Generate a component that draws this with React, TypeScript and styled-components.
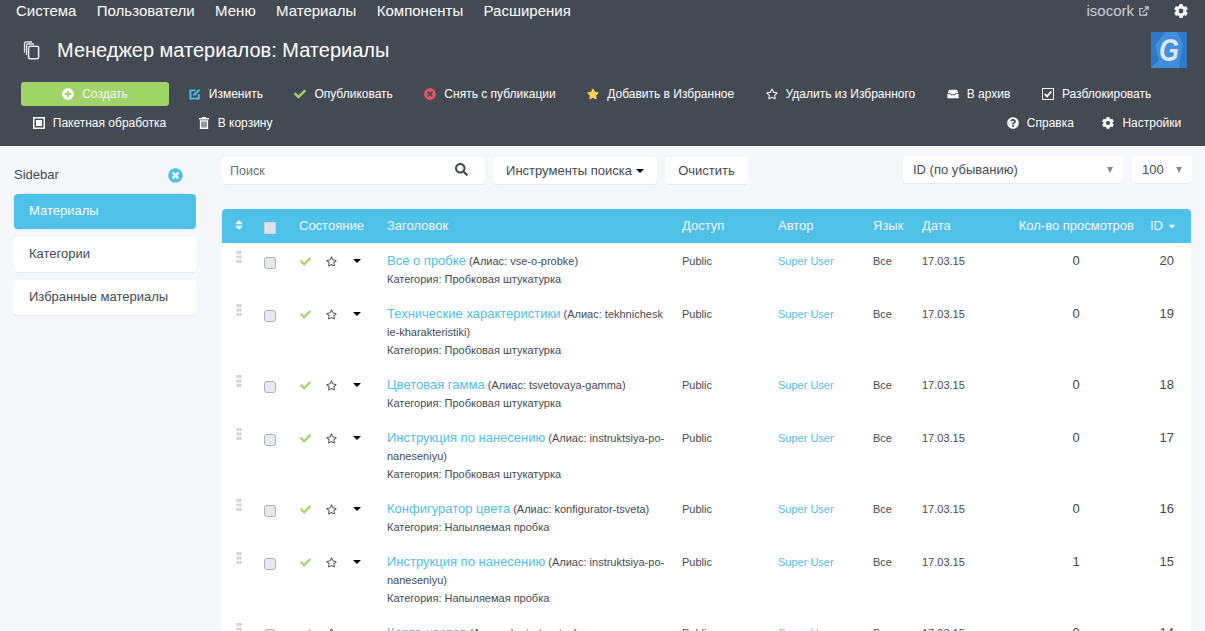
import { ReactNode } from "react"
import styled, { createGlobalStyle } from "styled-components"
import {
  FaCaretDown,
  FaCheck,
  FaPlusCircle,
  FaQuestionCircle,
  FaRegStar,
  FaSearch,
  FaStar,
  FaTimesCircle,
  FaSort,
} from "react-icons/fa"

const GlobalStyle = createGlobalStyle`
  html, body {
    margin: 0;
    height: 100%;
    overflow: hidden;
    background: #f5f7fa;
    font-family: "Liberation Sans", Arial, sans-serif;
    color: #434a54;
  }
  * {
    box-sizing: border-box;
  }
`

const Header = styled.header`
  background: #434a54;
  height: 146px;
  color: #fff;
`

const TopNav = styled.nav`
  display: flex;
  align-items: center;
  justify-content: space-between;
  height: 21px;
  padding: 0 16px;
  font-size: 15px;
`

const NavLinks = styled.div`
  display: flex;
  gap: 20.4px;
`

const NavRight = styled.div`
  display: flex;
  align-items: center;
  gap: 5px;
  color: #ccd1d9;
`

const NavGear = styled.span`
  display: flex;
  margin-left: 20px;
  margin-right: 1px;
  color: #fff;
`

const TitleRow = styled.div`
  display: flex;
  align-items: center;
  height: 46px;
  padding: 5px 18px 0 21px;
  margin-top: 3px;
`

const PageTitle = styled.h1`
  flex: 1;
  margin: 0 0 0 16px;
  font-size: 20px;
  font-weight: 400;
  line-height: 24px;
`

const Toolbar = styled.div`
  display: flex;
  flex-wrap: wrap;
  padding: 9px 8px 0 17px;
  font-size: 12px;
`

const ToolbarRow = styled.div<{ $spread?: boolean }>`
  display: flex;
  width: 100%;
  height: 29px;
  align-items: center;
  justify-content: ${(props) => (props.$spread ? "space-between" : "flex-start")};
`

const ToolGroup = styled.div<{ $squeeze?: boolean }>`
  display: flex;

  button + button {
    margin-left: ${(props) => (props.$squeeze ? "-3px" : "0")};
  }
`

const ToolButton = styled.button<{ $iconColor?: string }>`
  display: flex;
  align-items: center;
  gap: 8px;
  height: 24px;
  padding: 0 15.75px;
  border: 0;
  background: none;
  color: #fff;
  font: inherit;

  svg {
    width: 12px;
    height: 12px;
    color: ${(props) => props.$iconColor || "#fff"};
    flex: none;
  }
`

const CreateButton = styled(ToolButton)`
  justify-content: center;
  width: 148px;
  margin: 0 4px 0 4px;
  border-radius: 3px;
  background: #a0d468;
  color: #f5f7fa;
`

const Main = styled.main`
  display: flex;
  padding: 10px 13px 0 14px;
`

const Sidebar = styled.aside`
  flex: none;
  width: 182px;
  margin-right: 26px;
`

const SidebarHead = styled.div`
  display: flex;
  align-items: center;
  justify-content: space-between;
  height: 38px;
  padding: 0 13px 0 0;
  font-size: 13px;
  line-height: 36px;

  svg {
    color: #4fc0e8;
    font-size: 15px;
  }
`

const SideItem = styled.a<{ $active?: boolean }>`
  display: block;
  height: 35px;
  margin-bottom: 8px;
  padding-left: 15px;
  border-radius: 4px;
  background: ${(props) => (props.$active ? "#4fc0e8" : "#fff")};
  box-shadow: 0 1px 1px rgba(0, 0, 0, 0.06);
  color: ${(props) => (props.$active ? "#fff" : "#434a54")};
  font-size: 13px;
  line-height: 33px;
`

const Content = styled.section`
  flex: 1;
  min-width: 0;
`

const FilterBar = styled.div`
  display: flex;
  height: 53px;
  font-size: 13px;
`

const SearchBox = styled.div`
  display: flex;
  align-items: center;
  justify-content: space-between;
  width: 263px;
  height: 27px;
  margin: 1px 8px 0 0;
  padding: 0 17px 0 8px;
  border-radius: 4px;
  background: #fff;
  box-shadow: 0 1px 1px rgba(0, 0, 0, 0.06);
  color: #656d78;
  font-size: 12.5px;

  svg {
    color: #434a54;
    font-size: 13px;
    margin-top: -2px;
  }
`

const FilterButton = styled.button<{ $width: number }>`
  display: flex;
  align-items: center;
  justify-content: center;
  gap: 4px;
  width: ${(props) => props.$width}px;
  height: 27px;
  margin: 1px 8px 0 0;
  padding: 0;
  border: 0;
  border-radius: 4px;
  background: #fff;
  box-shadow: 0 1px 1px rgba(0, 0, 0, 0.06);
  color: #434a54;
  font: inherit;
`

const SelectBox = styled.div<{ $width: number; $pushed?: boolean }>`
  display: flex;
  align-items: center;
  justify-content: space-between;
  width: ${(props) => props.$width}px;
  height: 27px;
  margin-left: ${(props) => (props.$pushed ? "auto" : "9px")};
  padding: 0 10px;
  border-radius: 4px;
  background: #fff;
  box-shadow: 0 1px 1px rgba(0, 0, 0, 0.06);
`

const SelectArrow = styled.span`
  width: 0;
  height: 0;
  border-left: 3.5px solid transparent;
  border-right: 3.5px solid transparent;
  border-top: 6px solid #888;
`

const Table = styled.table`
  width: 969px;
  table-layout: fixed;
  border-collapse: separate;
  border-spacing: 0;
  background: #fff;
  font-size: 11px;
`

const HeadCell = styled.th<{ $align?: string; $padRight?: number }>`
  height: 34px;
  padding: 0 ${(props) => props.$padRight || 8}px 1px 8px;
  background: #4fc0e8;
  color: #f5f7fa;
  font-size: 13px;
  font-weight: 400;
  text-align: ${(props) => props.$align || "left"};
  white-space: nowrap;

  &:first-child {
    border-top-left-radius: 4px;
  }

  &:last-child {
    border-top-right-radius: 4px;
  }

  svg {
    vertical-align: -1px;
  }
`

const Cell = styled.td<{ $align?: string; $size?: number; $padRight?: number }>`
  padding: 9px ${(props) => props.$padRight || 8}px 8px 8px;
  vertical-align: top;
  line-height: 18px;
  font-size: ${(props) => props.$size || 11}px;
  text-align: ${(props) => props.$align || "left"};
`

const Check = styled.input.attrs({ type: "checkbox" })`
  appearance: none;
  display: block;
  width: 12px;
  height: 12px;
  margin: 5px 0 0;
  border: 1px solid #aab2bd;
  border-radius: 3px;
  background: #e6e9ed;
`

const HeadCheck = styled(Check)`
  margin: 4px 0 0;
  border-color: #ccd1d9;
  border-radius: 0;
  background: #dfe3e8;
`

const StateIcons = styled.div`
  display: flex;
  align-items: center;
  height: 18px;
  padding-left: 1px;
  font-size: 11px;
`

const StateSlot = styled.span<{ $width: number; $color: string }>`
  display: flex;
  width: ${(props) => props.$width}px;
  color: ${(props) => props.$color};
`

const Caret = styled.span`
  width: 0;
  height: 0;
  border-left: 4px solid transparent;
  border-right: 4px solid transparent;
  border-top: 4px solid #000;
`

const TitleLink = styled.a`
  color: #4fc0e8;
  font-size: 13px;
`

const Alias = styled.span`
  word-break: break-all;
`

const AuthorLink = styled.a`
  color: #4fc0e8;
`

const Handle = styled.svg`
  display: block;
  margin: -1px auto 0;
  fill: #ccd1d9;
`

function PagesIcon() {
  return (
    <svg width="20" height="20" viewBox="0 0 20 20" fill="none" stroke="#e6e9ed" strokeWidth="1.3">
      <path d="M3.5 12.5 V3.5 Q3.5 2 5 2 H11" />
      <path d="M5.5 15 V5.5 Q5.5 4 7 4 H13" />
      <rect x="7.6" y="6.2" width="10" height="12.6" rx="1.5" strokeWidth="1.6" />
    </svg>
  )
}

function GLogo() {
  return (
    <svg width="36" height="36" viewBox="0 0 36 36">
      <rect width="36" height="36" fill="#3f8fdc" />
      <path d="M0 0 H14 L4 14 L8 28 L0 36 Z" fill="#2f79c4" />
      <path d="M36 0 H26 L32 12 L28 36 H36 Z" fill="#2f79c4" />
      <text
        transform="translate(18 29) scale(0.8 1)"
        textAnchor="middle"
        fontFamily="Liberation Sans, sans-serif"
        fontSize="32"
        fontWeight="700"
        fontStyle="italic"
        fill="#dfe6ec"
      >
        G
      </text>
    </svg>
  )
}

function GearIcon({ size = 14 }: { size?: number }) {
  return (
    <svg width={size} height={size} viewBox="0 0 14 14" fill="currentColor">
      {[0, 60, 120, 180, 240, 300].map((angle) => (
        <rect key={angle} x="5.2" y="0.2" width="3.6" height="3" transform={`rotate(${angle} 7 7)`} />
      ))}
      <circle cx="7" cy="7" r="3.9" fill="none" stroke="currentColor" strokeWidth="3" />
    </svg>
  )
}

function LinkOutIcon() {
  return (
    <svg width="10" height="10" viewBox="0 0 10 10" fill="none" stroke="currentColor" strokeWidth="1.2">
      <path d="M7.5 6 V9.2 H0.8 V2.5 H4" />
      <path d="M3.6 6.4 L8.8 1.2 M5.8 0.8 H9.2 V4.2" />
    </svg>
  )
}

function EditIcon() {
  return (
    <svg viewBox="0 0 13 13" fill="none">
      <path d="M10.5 6.5 V11.5 H1.5 V2.5 H7" stroke="#4fc0e8" strokeWidth="2" />
      <path d="M4.5 8.5 L5 6.3 L10.3 1 L12 2.7 L6.7 8 Z" fill="#4fc0e8" />
    </svg>
  )
}

function BatchIcon() {
  return (
    <svg viewBox="0 0 12 12">
      <rect x="0.75" y="0.75" width="10.5" height="10.5" fill="none" stroke="#fff" strokeWidth="1.5" />
      <rect x="3" y="3" width="6" height="6" fill="#fff" />
    </svg>
  )
}

function ArchiveIcon() {
  return (
    <svg viewBox="0 0 13 9" fill="#fff">
      <path d="M3 0 H10 Q11 0 11.5 1.5 L12.3 3.6 H9.2 L8.4 4.8 H4.6 L3.8 3.6 H0.7 L1.5 1.5 Q2 0 3 0 Z" />
      <path d="M0.4 4.6 H3.3 L4.1 5.8 H8.9 L9.7 4.6 H12.6 V9 H0.4 Z" />
    </svg>
  )
}

function UnlockIcon() {
  return (
    <svg viewBox="0 0 13 13" fill="none" stroke="#fff">
      <rect x="0.5" y="0.5" width="12" height="12" />
      <path d="M3 6.5 L5.5 9 L10 3.8" strokeWidth="2" />
    </svg>
  )
}

function TrashIcon() {
  return (
    <svg viewBox="0 0 11 13" fill="#fff">
      <path d="M3.5 0 H7.5 V1 H11 V2.6 H0 V1 H3.5 Z" />
      <path fillRule="evenodd" d="M1 3.4 H10 V13 H1 Z M2.8 5 V11.4 H4 V5 Z M4.9 5 V11.4 H6.1 V5 Z M7 5 V11.4 H8.2 V5 Z" />
    </svg>
  )
}

function DragHandle() {
  return (
    <Handle width="6" height="12" viewBox="0 0 6 12">
      {[0, 4.5, 9].map((y) => (
        <g key={y}>
          <rect x="0.5" y={y} width="2.3" height="3" />
          <rect x="3.2" y={y} width="2.3" height="3" />
        </g>
      ))}
    </Handle>
  )
}

function Tool({ icon, label, color }: { icon: ReactNode; label: string; color?: string }) {
  return (
    <ToolButton $iconColor={color}>
      {icon}
      {label}
    </ToolButton>
  )
}

const columns = [34, 35, 88, 295, 96, 95, 49, 96, 132, 49]

const rows = [
  { title: "Все о пробке", alias: "vse-o-probke", category: "Пробковая штукатурка", views: 0, id: 20 },
  { title: "Технические характеристики", alias: "tekhnicheskie-kharakteristiki", category: "Пробковая штукатурка", views: 0, id: 19 },
  { title: "Цветовая гамма", alias: "tsvetovaya-gamma", category: "Пробковая штукатурка", views: 0, id: 18 },
  { title: "Инструкция по нанесению", alias: "instruktsiya-po-naneseniyu", category: "Пробковая штукатурка", views: 0, id: 17 },
  { title: "Конфигуратор цвета", alias: "konfigurator-tsveta", category: "Напыляемая пробка", views: 0, id: 16 },
  { title: "Инструкция по нанесению", alias: "instruktsiya-po-naneseniyu", category: "Напыляемая пробка", views: 1, id: 15 },
  { title: "Карта цветов", alias: "karta-tsvetov", category: "Напыляемая пробка", views: 0, id: 14 },
]

export default function App() {
  return (
    <>
      <GlobalStyle />
      <Header>
        <TopNav>
          <NavLinks>
            <span>Система</span>
            <span>Пользователи</span>
            <span>Меню</span>
            <span>Материалы</span>
            <span>Компоненты</span>
            <span>Расширения</span>
          </NavLinks>
          <NavRight>
            isocork <LinkOutIcon />
            <NavGear>
              <GearIcon />
            </NavGear>
          </NavRight>
        </TopNav>
        <TitleRow>
          <PagesIcon />
          <PageTitle>Менеджер материалов: Материалы</PageTitle>
          <GLogo />
        </TitleRow>
        <Toolbar>
          <ToolbarRow>
            <CreateButton>
              <FaPlusCircle />
              Создать
            </CreateButton>
            <Tool icon={<EditIcon />} label="Изменить" />
            <Tool icon={<FaCheck />} label="Опубликовать" color="#a0d468" />
            <Tool icon={<FaTimesCircle />} label="Снять с публикации" color="#ed5565" />
            <Tool icon={<FaStar />} label="Добавить в Избранное" color="#ffce54" />
            <Tool icon={<FaRegStar />} label="Удалить из Избранного" />
            <Tool icon={<ArchiveIcon />} label="В архив" />
            <Tool icon={<UnlockIcon />} label="Разблокировать" />
          </ToolbarRow>
          <ToolbarRow $spread>
            <ToolGroup>
              <Tool icon={<BatchIcon />} label="Пакетная обработка" />
              <Tool icon={<TrashIcon />} label="В корзину" />
            </ToolGroup>
            <ToolGroup $squeeze>
              <Tool icon={<FaQuestionCircle />} label="Справка" />
              <Tool icon={<GearIcon />} label="Настройки" />
            </ToolGroup>
          </ToolbarRow>
        </Toolbar>
      </Header>
      <Main>
        <Sidebar>
          <SidebarHead>
            Sidebar
            <FaTimesCircle />
          </SidebarHead>
          <SideItem $active>Материалы</SideItem>
          <SideItem>Категории</SideItem>
          <SideItem>Избранные материалы</SideItem>
        </Sidebar>
        <Content>
          <FilterBar>
            <SearchBox>
              Поиск
              <FaSearch />
            </SearchBox>
            <FilterButton $width={164}>
              Инструменты поиска
              <Caret />
            </FilterButton>
            <FilterButton $width={83}>Очистить</FilterButton>
            <SelectBox $width={220} $pushed>
              ID (по убыванию)
              <SelectArrow />
            </SelectBox>
            <SelectBox $width={60}>
              100
              <SelectArrow />
            </SelectBox>
          </FilterBar>
          <Table>
            <colgroup>
              {columns.map((width, i) => (
                <col key={i} width={width} />
              ))}
            </colgroup>
            <thead>
              <tr>
                <HeadCell $align="center">
                  <FaSort size={12} />
                </HeadCell>
                <HeadCell>
                  <HeadCheck />
                </HeadCell>
                <HeadCell>Состояние</HeadCell>
                <HeadCell>Заголовок</HeadCell>
                <HeadCell>Доступ</HeadCell>
                <HeadCell>Автор</HeadCell>
                <HeadCell>Язык</HeadCell>
                <HeadCell>Дата</HeadCell>
                <HeadCell $align="right">Кол-во просмотров</HeadCell>
                <HeadCell>
                  ID <FaCaretDown size={10} />
                </HeadCell>
              </tr>
            </thead>
            <tbody>
              {rows.map((row) => (
                <tr key={row.id}>
                  <Cell>
                    <DragHandle />
                  </Cell>
                  <Cell>
                    <Check />
                  </Cell>
                  <Cell>
                    <StateIcons>
                      <StateSlot $width={26} $color="#a0d468">
                        <FaCheck />
                      </StateSlot>
                      <StateSlot $width={27} $color="#434a54">
                        <FaRegStar />
                      </StateSlot>
                      <Caret />
                    </StateIcons>
                  </Cell>
                  <Cell $padRight={9.5}>
                    <TitleLink>{row.title}</TitleLink> <Alias>(Алиас: {row.alias})</Alias>
                    <br />
                    Категория: {row.category}
                  </Cell>
                  <Cell>Public</Cell>
                  <Cell>
                    <AuthorLink>Super User</AuthorLink>
                  </Cell>
                  <Cell>Все</Cell>
                  <Cell>17.03.15</Cell>
                  <Cell $align="center" $size={13}>
                    {row.views}
                  </Cell>
                  <Cell $align="right" $size={13} $padRight={17}>
                    {row.id}
                  </Cell>
                </tr>
              ))}
            </tbody>
          </Table>
        </Content>
      </Main>
    </>
  )
}
